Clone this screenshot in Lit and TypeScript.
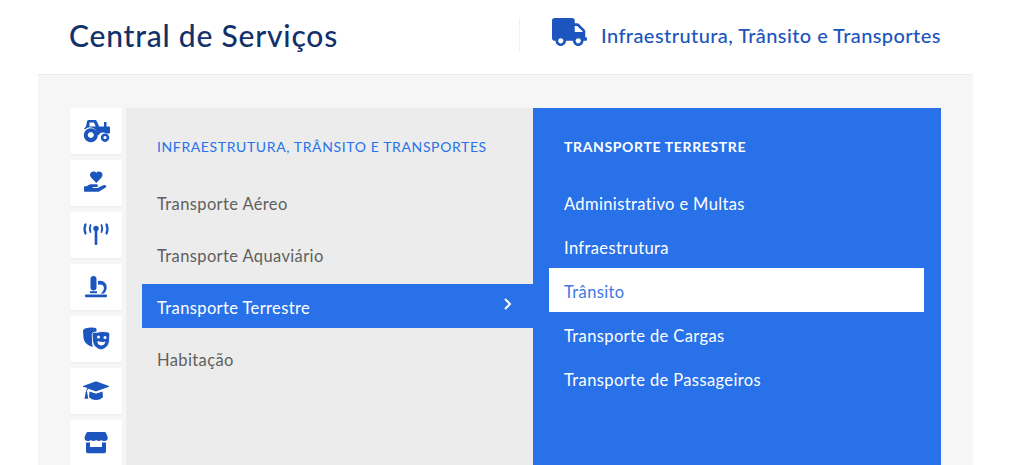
import { LitElement, html, css, svg } from "lit";
import { customElement } from "lit/decorators.js";

const tiles = [
  { y: 117, g: svg`<path d="M87 121.500q0-1.500 1.500-1.500h6.500q1.200 0 1.800 1.200l2.400 5.300h4.800v-4.500h2.500v4.500h2.500q1 0 1 1v5q0 1-1 1h-2.800a5 5 0 0 0-7.500 1.500h-1.700a7 7 0 0 0-12-5.500l-.5-.5q-.5-.5 0-1l1.500-1.500zM89.500 122.500v4h6.200l-1.800-4z" fill-rule="evenodd"/><path d="M90.800 128.200a7 7 0 1 0 .01 0zM90.800 132a3 3 0 1 1-.01 0z" fill-rule="evenodd"/><path d="M105 133.500a4.200 4.200 0 1 0 .01 0zM105 136a1.600 1.600 0 1 1-.01 0z" fill-rule="evenodd"/>` },
  { y: 169, g: svg`<path d="M96.300 183l-4.800-5c-2.900-3.100-1-6.500 2.200-6.500 1.100 0 2 .5 2.600 1.300.6-.8 1.500-1.300 2.600-1.300 3.200 0 5.100 3.400 2.200 6.500z"/><path d="M84 187q0-.8.700-.8h1.800l2-1.200q1.200-.7 2.700-.7h5q1.800 0 1.800 1.400t-1.800 1.400h-3.500v1h4.800l5.700-2.900q2-.8 2.900.5.600 1-.5 1.900l-6 3.600q-.8.600-2 .6H84.700q-.7 0-.7-.8z"/>` },
  { y: 221, g: svg`<circle cx="96" cy="228.500" r="2.700"/><rect x="94.700" y="229" width="2.600" height="16" rx="1"/><g fill="none" stroke="#1c55bd" stroke-linecap="round"><path d="M90.500 225q-1.500 3.500 0 7M101.500 225q1.500 3.500 0 7" stroke-width="1.800"/><path d="M85.500 224.500q-2 4.500 0 9M106.500 224.500q2 4.500 0 9" stroke-width="2.200"/></g>` },
  { y: 273, g: svg`<rect x="90.500" y="276" width="6" height="14.500" rx="3"/><path d="M98 281c5.500-1 9 2.500 8.700 7-.2 2-1.200 3.800-2.700 5.500h-3.500c2.500-1.500 3.500-3.500 3.400-5.700-.1-2.500-2.600-3.700-5.900-3z"/><rect x="90" y="291.200" width="7" height="2"/><rect x="85" y="294.500" width="22" height="2.800" rx="1"/>` },
  { y: 325, g: svg`<path d="M83 331q0-2 2-2.500 5-1.500 9.500-.8 2 .3 2 1.800v2q-3 .6-4 3l-.5 8q0 2.500 1 4-1.500.5-4-1-5-3-5.500-7.500z"/><path d="M96 332.500q6-1.800 12-.5 1.800.5 1.800 2.500l-.5 7.500q-.8 4.500-4.800 6.500-2.200 1.300-3.500 1.300t-3.500-1.300q-4-2-4.800-6.500l-.5-7.500q0-1.800 1.800-2.500z" stroke="#fff" stroke-width=".8"/><g fill="#fff"><circle cx="98.500" cy="337" r="1.500"/><circle cx="105" cy="337.500" r="1.500"/><path d="M97.500 341q4.500 2 8 .4-.8 4-4.500 4t-3.500-4.400z"/></g>` },
  { y: 377, g: svg`<path d="M95.500 381.500q.5-.2 1 0l12.500 4.500v.8l-12.500 4.500q-.5.2-1 0l-7.200-2.500q-1.300 1-1.500 3 .8 .5 .5 1.500l1 5.500h-3.800l1-5.500q-.3-1 .5-1.500.2-2.500 1.500-3.800L83 386.800v-.8z"/><path d="M89.500 391.500l6 2q.5.200 1 0l6-2 .5 5.500q-2.500 3-7 3t-7-3z"/>` },
  { y: 429, g: svg`<path d="M88 432h16.500q1 0 1.500 1l1.600 4q.5 1.500-.5 3-1.200 1.200-2.700 1.100h-.5q-1.500 0-2.500-1-1 1-2.500 1t-2.700-1q-1.200 1-2.800 1-1.500 0-2.500-1-1 1-2.500 1h-.6q-1.500 0-2.600-1.100-1-1.500-.5-3l1.600-4q.5-1 1.500-1z"/><path d="M86 442.500h4v4.500h12v-4.500h4v9q0 1.800-1.800 1.800H87.800q-1.800 0-1.800-1.800z"/>` },
];

const left = ["Transporte Aéreo", "Transporte Aquaviário", "Transporte Terrestre", "Habitação"];
const right = ["Administrativo e Multas", "Infraestrutura", "Trânsito", "Transporte de Cargas", "Transporte de Passageiros"];

@customElement("app-root")
export class AppRoot extends LitElement {
  static styles = css`
    :host {
      display: block;
      width: 1024px;
      height: 465px;
      overflow: hidden;
      background: #fff;
      font-family: "Lato", "Liberation Sans", sans-serif;
    }
    .header {
      height: 74px;
      display: flex;
      align-items: center;
      padding: 0 83px 5px 69px;
      box-sizing: border-box;
    }
    h1 {
      margin: 0;
      width: 450px;
      flex: none;
      font-size: 30px;
      font-weight: 500;
      letter-spacing: 0.79px;
      color: #12316a;
    }
    .crumb {
      flex: 1;
      height: 34px;
      border-left: 1px solid #f1f1f1;
      display: flex;
      align-items: center;
      padding-left: 32px;
      gap: 14px;
      color: #1c55bd;
      font-size: 20px;
      font-weight: 500;
      letter-spacing: 0.42px;
      white-space: nowrap;
    }
    .crumb svg { width: 35px; height: 28px; fill: #1c55bd; margin-top: -5px; flex: none; }
    .panel {
      margin: 0 51px 0 38px;
      border-top: 1px solid #ececec;
      background: #f6f6f6;
      height: 391px;
      padding: 33px 32px 0;
      display: flex;
      box-sizing: border-box;
      overflow: hidden;
    }
    .tiles {
      width: 52px;
      margin-right: 4px;
      display: flex;
      flex-direction: column;
      gap: 6px;
      flex: none;
    }
    .tile {
      width: 52px;
      height: 46px;
      flex: none;
      background: #fff;
      box-shadow: 0 1px 2px rgba(0,0,0,.05);
      display: flex;
      align-items: center;
      justify-content: center;
    }
    .tile svg { width: 28px; height: 28px; fill: #1c55bd; }
    .col {
      width: 407px;
      padding-top: 29px;
      box-sizing: border-box;
      flex: none;
      font-size: 16.5px;
      letter-spacing: 0.38px;
    }
    .col.l { background: #ececec; padding-left: 16px; }
    .col.r { background: #2871e9; width: 408px; padding-left: 16px; padding-right: 17px; color: #fff; }
    h2 {
      margin: 0 0 23px 15px;
      height: 20px;
      line-height: 20px;
      font-size: 14px;
      font-weight: 700;
      letter-spacing: 0.64px;
      text-transform: uppercase;
    }
    .l h2 { color: #2871e9; font-weight: 400; letter-spacing: .62px; }
    .item {
      height: 44px;
      display: flex;
      align-items: center;
      justify-content: space-between;
      padding: 3px 20px 0 15px;
      box-sizing: border-box;
    }
    .l .list { display: flex; flex-direction: column; gap: 8px; }
    .l .item { color: #5f5f5f; }
    .l .item.on { background: #2871e9; color: #fff; }
    .item.cur { background: #fff; color: #3f78e3; }
    .chev { width: 10px; height: 14px; margin-top: -7px; fill: none; stroke: #fff; stroke-width: 2; }
  `;

  render() {
    return html`
      <div class="header">
        <h1>Central de Serviços</h1>
        <div class="crumb">
          <svg viewBox="0 0 640 512"><path d="M624 352h-16V243.900c0-12.700-5.100-24.900-14.100-33.900L494 110.100c-9-9-21.200-14.100-33.900-14.100H416V48c0-26.500-21.500-48-48-48H48C21.500 0 0 21.500 0 48v320c0 26.500 21.500 48 48 48h16c0 53 43 96 96 96s96-43 96-96h128c0 53 43 96 96 96s96-43 96-96h48c8.800 0 16-7.200 16-16v-32c0-8.800-7.200-16-16-16zM160 464c-26.500 0-48-21.500-48-48s21.500-48 48-48 48 21.500 48 48-21.500 48-48 48zm320 0c-26.500 0-48-21.500-48-48s21.500-48 48-48 48 21.500 48 48-21.500 48-48 48zm80-208H416V144h44.100l99.900 99.900V256z"/></svg>
          <span>Infraestrutura, Trânsito e Transportes</span>
        </div>
      </div>
      <div class="panel">
        <div class="tiles">
          ${tiles.map(t => html`<div class="tile"><svg viewBox="82 ${t.y} 28 28">${t.g}</svg></div>`)}
        </div>
        <div class="col l">
          <h2>Infraestrutura, Trânsito e Transportes</h2>
          <div class="list">
            ${left.map((x, i) => html`<div class="item ${i === 2 ? "on" : ""}"><span>${x}</span>${i === 2 ? html`<svg class="chev" viewBox="0 0 10 14"><path d="M2 2l5 5-5 5"/></svg>` : ""}</div>`)}
          </div>
        </div>
        <div class="col r">
          <h2>Transporte Terrestre</h2>
          ${right.map((x, i) => html`<div class="item ${i === 2 ? "cur" : ""}"><span>${x}</span></div>`)}
        </div>
      </div>
    `;
  }
}
